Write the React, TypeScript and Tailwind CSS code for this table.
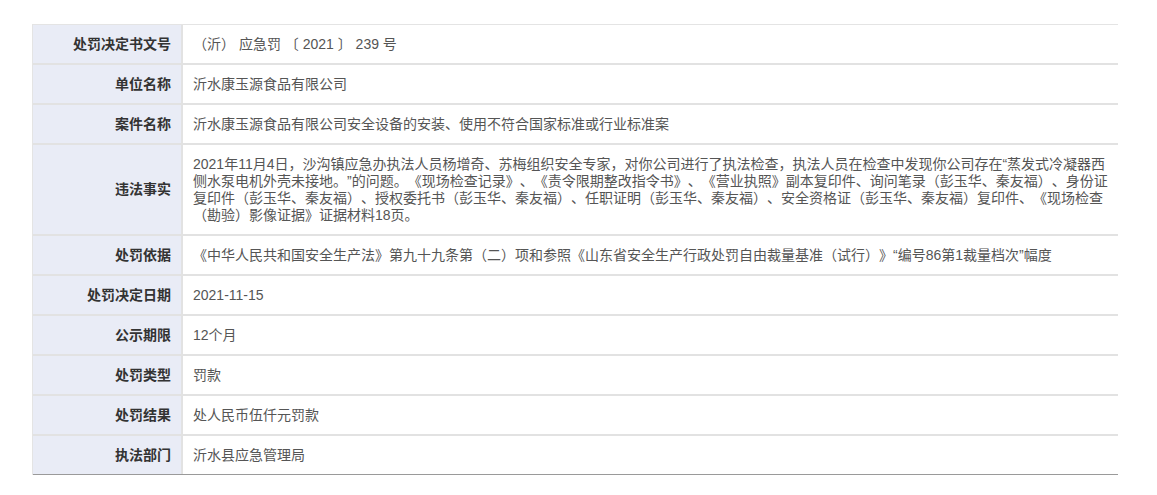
const rows: { label: string; value: string }[] = [
  { label: "处罚决定书文号", value: "（沂） 应急罚 〔 2021 〕 239 号" },
  { label: "单位名称", value: "沂水康玉源食品有限公司" },
  { label: "案件名称", value: "沂水康玉源食品有限公司安全设备的安装、使用不符合国家标准或行业标准案" },
  {
    label: "违法事实",
    value:
      "2021年11月4日，沙沟镇应急办执法人员杨增奇、苏梅组织安全专家，对你公司进行了执法检查，执法人员在检查中发现你公司存在\u201c蒸发式冷凝器西侧水泵电机外壳未接地。\u201d的问题。《现场检查记录》、《责令限期整改指令书》、《营业执照》副本复印件、询问笔录（彭玉华、秦友福）、身份证复印件（彭玉华、秦友福）、授权委托书（彭玉华、秦友福）、任职证明（彭玉华、秦友福）、安全资格证（彭玉华、秦友福）复印件、《现场检查（勘验）影像证据》证据材料18页。",
  },
  {
    label: "处罚依据",
    value:
      "《中华人民共和国安全生产法》第九十九条第（二）项和参照《山东省安全生产行政处罚自由裁量基准（试行）》\u201c编号86第1裁量档次\u201d幅度",
  },
  { label: "处罚决定日期", value: "2021-11-15" },
  { label: "公示期限", value: "12个月" },
  { label: "处罚类型", value: "罚款" },
  { label: "处罚结果", value: "处人民币伍仟元罚款" },
  { label: "执法部门", value: "沂水县应急管理局" },
];

export default function App() {
  return (
    <div
      className="min-h-[495px] bg-white pt-[24px] pl-[32px] [text-spacing-trim:space-all]"
      style={{ fontFamily: '"Liberation Sans", "Noto Sans CJK SC", sans-serif' }}
    >
      <div className="w-[1086px] border-t border-l border-[#e4e4e4]">
        {rows.map((row, i) => (
          <div
            key={row.label}
            className={
              i === rows.length - 1
                ? "flex border-b border-[#9a9a9a]"
                : "flex border-b-2 border-[#e2e2e2]"
            }
          >
            <div className="flex w-[150px] shrink-0 items-center justify-end border-r-2 border-[#e2e2e2] bg-[#e9ecf6] pr-[10px] text-[14px] font-bold text-[#333]">
              {row.label}
            </div>
            <div className="flex min-h-[38px] flex-1 items-center py-[10.5px] pl-[10px] pr-[10px] text-[14px] leading-[17px] text-[#555]">
              <span>{row.value}</span>
            </div>
          </div>
        ))}
      </div>
    </div>
  );
}
